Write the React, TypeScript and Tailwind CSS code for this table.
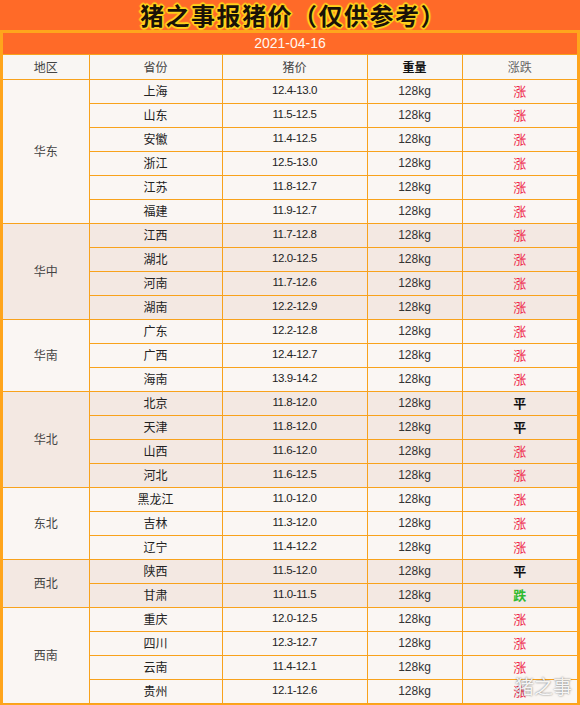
import React from "react";

type Row = { p: string; price: string; t: "涨" | "平" | "跌" };
type Group = { region: string; rows: Row[] };

const groups: Group[] = [
  {
    region: "华东",
    rows: [
      { p: "上海", price: "12.4-13.0", t: "涨" },
      { p: "山东", price: "11.5-12.5", t: "涨" },
      { p: "安徽", price: "11.4-12.5", t: "涨" },
      { p: "浙江", price: "12.5-13.0", t: "涨" },
      { p: "江苏", price: "11.8-12.7", t: "涨" },
      { p: "福建", price: "11.9-12.7", t: "涨" },
    ],
  },
  {
    region: "华中",
    rows: [
      { p: "江西", price: "11.7-12.8", t: "涨" },
      { p: "湖北", price: "12.0-12.5", t: "涨" },
      { p: "河南", price: "11.7-12.6", t: "涨" },
      { p: "湖南", price: "12.2-12.9", t: "涨" },
    ],
  },
  {
    region: "华南",
    rows: [
      { p: "广东", price: "12.2-12.8", t: "涨" },
      { p: "广西", price: "12.4-12.7", t: "涨" },
      { p: "海南", price: "13.9-14.2", t: "涨" },
    ],
  },
  {
    region: "华北",
    rows: [
      { p: "北京", price: "11.8-12.0", t: "平" },
      { p: "天津", price: "11.8-12.0", t: "平" },
      { p: "山西", price: "11.6-12.0", t: "涨" },
      { p: "河北", price: "11.6-12.5", t: "涨" },
    ],
  },
  {
    region: "东北",
    rows: [
      { p: "黑龙江", price: "11.0-12.0", t: "涨" },
      { p: "吉林", price: "11.3-12.0", t: "涨" },
      { p: "辽宁", price: "11.4-12.2", t: "涨" },
    ],
  },
  {
    region: "西北",
    rows: [
      { p: "陕西", price: "11.5-12.0", t: "平" },
      { p: "甘肃", price: "11.0-11.5", t: "跌" },
    ],
  },
  {
    region: "西南",
    rows: [
      { p: "重庆", price: "12.0-12.5", t: "涨" },
      { p: "四川", price: "12.3-12.7", t: "涨" },
      { p: "云南", price: "11.4-12.1", t: "涨" },
      { p: "贵州", price: "12.1-12.6", t: "涨" },
    ],
  },
];

const cjk = { fontFamily: '"Noto Sans CJK SC", "Liberation Sans", sans-serif' };
const num = { fontFamily: '"Liberation Sans", "Noto Sans CJK SC", sans-serif' };

function Trend({ t }: { t: Row["t"] }) {
  if (t === "涨") return <span className="text-[#ee2a4c]">涨</span>;
  if (t === "跌") return <span className="text-[#2fba2f] font-bold">跌</span>;
  return <span className="text-[#111] font-bold">平</span>;
}

export default function App() {
  return (
    <div className="relative w-[580px] h-[705px] bg-[#ff6a28] overflow-hidden" style={cjk}>
      <div className="h-[30px] flex items-center justify-center">
        <span
          className="text-[24px] font-bold text-[#1a1208] leading-[28px] tracking-[1.5px] pl-[6px]"
          style={{
            textShadow:
              "1px 1px 0 #ffd21c, -1px -1px 0 #ffd21c, 1px -1px 0 #ffd21c, -1px 1px 0 #ffd21c, 0 2px 1px #ffd21c, 2px 0 1px #ffd21c, 0 -2px 1px #ffd21c, -2px 0 1px #ffd21c",
          }}
        >
          猪之事报猪价（仅供参考）
        </span>
      </div>
      <div className="border-[3px] border-b-2 border-[#ffa51c] bg-[#faf6f3]">
        <div className="h-[22px] flex items-center justify-center bg-[#ff6a28] text-[#fff8f0] text-[14px] border-b border-[#f8a21c]" style={num}>
          2021-04-16
        </div>
        <table className="table-fixed border-collapse w-[574px] text-[12px] text-[#333]">
          <colgroup>
            <col className="w-[86px]" />
            <col className="w-[133px]" />
            <col className="w-[145px]" />
            <col className="w-[95px]" />
            <col className="w-[115px]" />
          </colgroup>
          <thead>
            <tr className="h-[24px] bg-[#f9f6f3] text-[#444]">
              <th className="font-normal border-r border-b border-[#f8a21c] p-0">地区</th>
              <th className="font-normal border-r border-b border-[#f8a21c] p-0">省份</th>
              <th className="font-normal border-r border-b border-[#f8a21c] p-0">猪价</th>
              <th className="font-bold text-[#111] border-r border-b border-[#f8a21c] p-0">重量</th>
              <th className="font-normal text-[#666] border-b border-[#f8a21c] p-0">涨跌</th>
            </tr>
          </thead>
          <tbody>
            {groups.map((g, gi) => {
              const bg = gi % 2 === 0 ? "bg-[#faf6f3]" : "bg-[#f3e8e2]";
              return g.rows.map((r, ri) => (
                <tr key={g.region + r.p} className={`h-[24px] ${bg}`}>
                  {ri === 0 && (
                    <td
                      rowSpan={g.rows.length}
                      className="text-center align-middle border-r border-b border-[#f8a21c] p-0 text-[#444]"
                    >
                      {g.region}
                    </td>
                  )}
                  <td className="text-center border-r border-b border-[#f8a21c] p-0 text-[#222]">{r.p}</td>
                  <td className="text-center border-r border-b border-[#f8a21c] p-0 text-[11.5px] text-[#222] tracking-[-0.4px]" style={num}>
                    {r.price}
                  </td>
                  <td className="text-center border-r border-b border-[#f8a21c] p-0 text-[12px] text-[#333]" style={num}>
                    128kg
                  </td>
                  <td className="text-center border-b border-[#f8a21c] p-0 text-[13px]">
                    <Trend t={r.t} />
                  </td>
                </tr>
              ));
            })}
          </tbody>
        </table>
      </div>
      <div
        className="absolute right-[8px] bottom-[10px] text-[19px] text-white/90 leading-none"
        style={{ textShadow: "0 0 2px rgba(0,0,0,0.6)" }}
      >
        猪之事
      </div>
    </div>
  );
}
